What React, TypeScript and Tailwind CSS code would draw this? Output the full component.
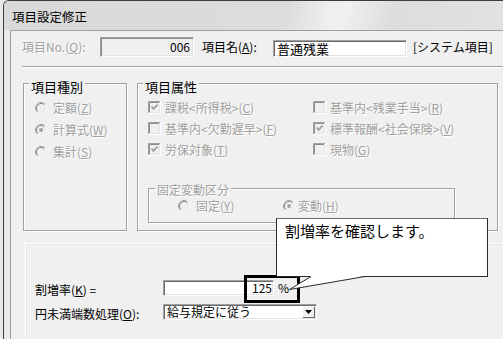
import React from "react";

const DIS = "text-[#a0a0a0] [text-shadow:1px_1px_0_#ffffff]";

function U({ children }: { children: React.ReactNode }) {
  return <span className="underline decoration-1 underline-offset-[1px]">{children}</span>;
}

function Radio({ checked }: { checked?: boolean }) {
  return (
    <svg width="12" height="12" viewBox="0 0 12 12" className="shrink-0">
      <circle cx="6" cy="6" r="5" fill="#f0f0f0" />
      <path d="M2.11 9.89 A5.5 5.5 0 0 1 9.89 2.11" stroke="#a0a0a0" fill="none" />
      <path d="M9.89 2.11 A5.5 5.5 0 0 1 2.11 9.89" stroke="#ffffff" fill="none" />
      <path d="M2.82 9.18 A4.5 4.5 0 0 1 9.18 2.82" stroke="#8a8a8a" fill="none" />
      <path d="M9.18 2.82 A4.5 4.5 0 0 1 2.82 9.18" stroke="#e3e3e3" fill="none" />
      {checked && <circle cx="6" cy="6" r="1.9" fill="#a0a0a0" />}
    </svg>
  );
}

function Check({ checked }: { checked?: boolean }) {
  return (
    <svg width="13" height="13" viewBox="0 0 13 13" className="shrink-0">
      <rect x="0" y="0" width="13" height="13" fill="#f0f0f0" />
      <path d="M0.5 12 V0.5 H12" stroke="#a0a0a0" fill="none" />
      <path d="M0 12.5 H12.5 V0" stroke="#ffffff" fill="none" />
      <path d="M1.5 11 V1.5 H11" stroke="#8a8a8a" fill="none" />
      <path d="M1.5 11.5 H11.5 V1.5" stroke="#e3e3e3" fill="none" />
      {checked && (
        <path d="M3.5 5.5 L5.5 7.8 L9.6 3.6" stroke="#a0a0a0" strokeWidth="1.8" fill="none" />
      )}
    </svg>
  );
}

function GroupBox({
  title,
  titleClass,
  className,
  children,
}: {
  title: React.ReactNode;
  titleClass: string;
  className: string;
  children?: React.ReactNode;
}) {
  return (
    <div
      className={
        "border border-[#a0a0a0] shadow-[inset_1px_1px_0_#ffffff,1px_1px_0_#ffffff] " + className
      }
    >
      <div className={"ml-[5px] w-fit px-[2px] bg-[#f0f0f0] " + titleClass}>{title}</div>
      {children}
    </div>
  );
}

const checks: { label: React.ReactNode; checked: boolean }[] = [
  { label: <>課税{"<"}所得税{">"}(<U>C</U>)</>, checked: true },
  { label: <>基準内{"<"}残業手当{">"}(<U>R</U>)</>, checked: false },
  { label: <>基準内{"<"}欠勤遅早{">"}(<U>F</U>)</>, checked: false },
  { label: <>標準報酬{"<"}社会保険{">"}(<U>V</U>)</>, checked: true },
  { label: <>労保対象(<U>T</U>)</>, checked: true },
  { label: <>現物(<U>G</U>)</>, checked: false },
];

export default function App() {
  return (
    <div className="relative w-[503px] h-[339px] overflow-hidden bg-[#e8e8e8] font-['Noto_Sans_CJK_JP','Noto_Sans',sans-serif] text-[12px] leading-[12px] text-black">
      {/* window */}
      <div className="ml-[3px] w-[540px] h-[420px] border-l border-t border-[#3c3c3c] rounded-tl-[6px] bg-[#e9e9e9] flex flex-col">
        {/* title bar */}
        <div className="h-[29px] shrink-0 flex items-center pl-[8px] pt-[2px] rounded-tl-[5px] bg-[linear-gradient(103deg,#d9d9d9_0%,#dcdcdc_52%,#eeeeee_60%,#f0f0f0_63%,#dddddd_72%,#e3e3e3_100%)] text-[12.5px]">
          項目設定修正
        </div>
        {/* body */}
        <div className="flex-1 pl-[6px]">
          <div className="h-full border-l border-t border-[#a0a0a0] bg-[#f0f0f0] pl-[11px] pt-[6px]">
            {/* top row */}
            <div className="h-[20px] flex items-center text-[12px] leading-[12px]">
              <div className={"w-[78px] " + DIS}>
                項目No.(<U>Q</U>):
              </div>
              <div className="w-[94px] h-[20px] border border-t-[#a0a0a0] border-l-[#a0a0a0] border-b-white border-r-white shadow-[inset_1px_1px_0_#8a8a8a,inset_-1px_-1px_0_#e3e3e3] bg-[#f0f0f0] flex items-center justify-end pr-[3px]">
                006
              </div>
              <div className="ml-[8px] w-[71px]">
                項目名(<U>A</U>):
              </div>
              <div className="w-[134px] h-[17px] self-end border border-t-[#a0a0a0] border-l-[#a0a0a0] border-b-white border-r-white shadow-[inset_1px_1px_0_#696969,inset_-1px_-1px_0_#e3e3e3] bg-white flex items-center pl-[3px] text-[13px] leading-[13px]">
                普通残業
              </div>
              <div className="ml-[6px]">[システム項目]</div>
            </div>

            {/* separator */}
            <div className="mt-[9px] h-0 border-t border-b border-t-[#a0a0a0] border-b-white" />

            {/* groups */}
            <div className="mt-[15px] ml-[1px] flex">
              <GroupBox
                title="項目種別"
                titleClass="-mt-[4px] h-[13px] text-[13px] leading-[13px]"
                className="w-[104px] h-[148px]"
              >
                <div className="mt-[4px] pl-[11px] flex flex-col">
                  {[
                    { l: <>定額(<U>Z</U>)</>, c: false },
                    { l: <>計算式(<U>W</U>)</>, c: true },
                    { l: <>集計(<U>S</U>)</>, c: false },
                  ].map((r, i) => (
                    <div key={i} className="h-[22px] flex items-center gap-[6px]">
                      <Radio checked={r.c} />
                      <span className={DIS}>{r.l}</span>
                    </div>
                  ))}
                </div>
              </GroupBox>

              <GroupBox
                title="項目属性"
                titleClass="-mt-[4px] h-[13px] text-[13px] leading-[13px]"
                className="ml-[10px] w-[361px] h-[148px]"
              >
                <div className="mt-[4px] pl-[10px] grid grid-cols-[165px_1fr]">
                  {checks.map((c, i) => (
                    <div key={i} className="h-[21px] flex items-center gap-[4px]">
                      <Check checked={c.checked} />
                      <span className={DIS}>{c.label}</span>
                    </div>
                  ))}
                </div>

                <GroupBox
                  title="固定変動区分"
                  titleClass={"-mt-[5px] h-[12px] text-[12px] leading-[12px] ml-[6px] " + DIS}
                  className="mt-[28px] ml-[10px] w-[307px] h-[35px]"
                >
                  <div className="mt-[3px] h-[14px] flex items-center pl-[29px]">
                    <div className="w-[105px] flex items-center gap-[6px]">
                      <Radio />
                      <span className={DIS}>
                        固定(<U>Y</U>)
                      </span>
                    </div>
                    <div className="flex items-center gap-[3px]">
                      <Radio checked />
                      <span className={DIS}>
                        変動(<U>H</U>)
                      </span>
                    </div>
                  </div>
                </GroupBox>
              </GroupBox>
            </div>

            {/* lower panel */}
            <div className="mt-[12px] ml-[3px] h-[140px] border-l border-t border-white shadow-[inset_1px_1px_0_#e6e6e6] pl-[9px] pt-[36px]">
              <div className="h-[16px] flex items-start">
                <div className="w-[128px] pt-[4px]">
                  割増率(<U>K</U>) =
                </div>
                <div className="w-[111px] h-[16px] border border-t-[#a0a0a0] border-l-[#a0a0a0] border-b-white border-r-white shadow-[inset_1px_1px_0_#696969,inset_-1px_-1px_0_#e3e3e3] bg-white flex items-center justify-end pr-[1px]">
                  125
                </div>
                <div className="ml-[4px] pt-[2px]">%</div>
              </div>
              <div className="mt-[8px] h-[16px] flex items-start">
                <div className="w-[128px] pt-[4px]">
                  円未満端数処理(<U>O</U>):
                </div>
                <div className="w-[154px] h-[16px] border border-t-[#a0a0a0] border-l-[#a0a0a0] border-b-white border-r-white shadow-[inset_1px_1px_0_#696969,inset_-1px_-1px_0_#e3e3e3] bg-white flex items-stretch p-[1px]">
                  <div className="flex-1 flex items-center pl-[2px]">給与規定に従う</div>
                  <div className="w-[13px] bg-[#f0f0f0] shadow-[inset_1px_1px_0_#ffffff,inset_-1px_-1px_0_#696969] flex items-center justify-center">
                    <svg width="7" height="4" viewBox="0 0 7 4">
                      <path d="M0 0 H7 L3.5 4 Z" fill="#000000" />
                    </svg>
                  </div>
                </div>
              </div>
            </div>
          </div>
        </div>
      </div>

      {/* highlight box around 125 % */}
      <div className="absolute left-[244px] top-[275px] w-[56px] h-[28px] border-[3px] border-black" />

      {/* callout */}
      <div className="absolute left-[276px] top-[218px] w-[212px] h-[59px] bg-white border border-[#2a2a2a] border-t-[#6e6e6e] pl-[8px] pt-[4px] text-[15px] leading-[16px]">
        割増率を確認します。
      </div>
      <svg
        className="absolute left-0 top-0 pointer-events-none"
        width="503"
        height="339"
        viewBox="0 0 503 339"
      >
        <polygon points="311,276 365,276 289.5,289.5" fill="#ffffff" />
        <path d="M311 276.5 L289.5 289.5 L365 276.5" stroke="#2a2a2a" strokeWidth="1" fill="none" />
      </svg>
    </div>
  );
}
